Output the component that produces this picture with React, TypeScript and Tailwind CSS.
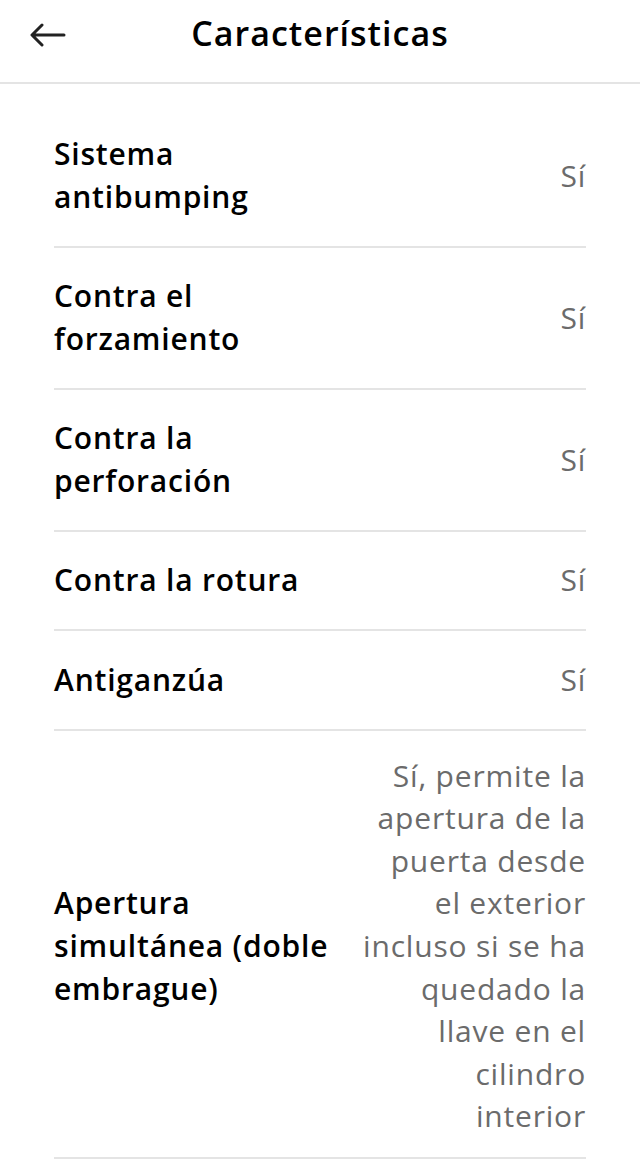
import React from "react";

type Row = { label: string[]; value: string[]; last?: boolean };

const rows: Row[] = [
  { label: ["Sistema", "antibumping"], value: ["Sí"] },
  { label: ["Contra el", "forzamiento"], value: ["Sí"] },
  { label: ["Contra la", "perforación"], value: ["Sí"] },
  { label: ["Contra la rotura"], value: ["Sí"] },
  { label: ["Antiganzúa"], value: ["Sí"] },
  {
    label: ["Apertura", "simultánea (doble", "embrague)"],
    value: [
      "Sí, permite la",
      "apertura de la",
      "puerta desde",
      "el exterior",
      "incluso si se ha",
      "quedado la",
      "llave en el",
      "cilindro",
      "interior",
    ],
    last: true,
  },
];

export default function App() {
  return (
    <div
      className="min-h-[1164px] w-[640px] bg-white"
      style={{ fontFamily: '"Open Sans", "Noto Sans", sans-serif' }}
    >
      <header className="grid h-[84px] grid-cols-[1fr_auto_1fr] items-center border-b-2 border-[#e4e4e4] pb-[14px]">
        <div className="pl-[30px] pt-[1px]">
          <svg width="36" height="24" viewBox="0 0 36 24" fill="none">
            <path
              d="M34 12H3M12 2L2 12l10 10"
              stroke="#222222"
              strokeWidth="3"
              strokeLinecap="round"
              strokeLinejoin="round"
            />
          </svg>
        </div>
        <h1 className="pb-[2px] text-[34px] font-semibold leading-none tracking-[1px] text-black">
          Características
        </h1>
        <div />
      </header>
      <main className="px-[54px] pt-[22px]">
        {rows.map((r, i) => (
          <div
            key={i}
            className={`flex items-center justify-between gap-4 border-b-2 border-[#e4e4e4] ${
              r.last ? "pt-[24px] pb-[18.6px]" : "py-[27.4px]"
            }`}
          >
            <div className="text-[30px] font-semibold leading-[42.6px] tracking-[0.8px] text-black">
              {r.label.map((l, j) => (
                <div key={j} className="whitespace-nowrap">
                  {l}
                </div>
              ))}
            </div>
            <div className="text-right text-[30px] font-normal leading-[42.6px] tracking-[0.8px] text-[#6b6b6b]">
              {r.value.map((v, j) => (
                <div key={j} className="whitespace-nowrap">
                  {v}
                </div>
              ))}
            </div>
          </div>
        ))}
      </main>
    </div>
  );
}
